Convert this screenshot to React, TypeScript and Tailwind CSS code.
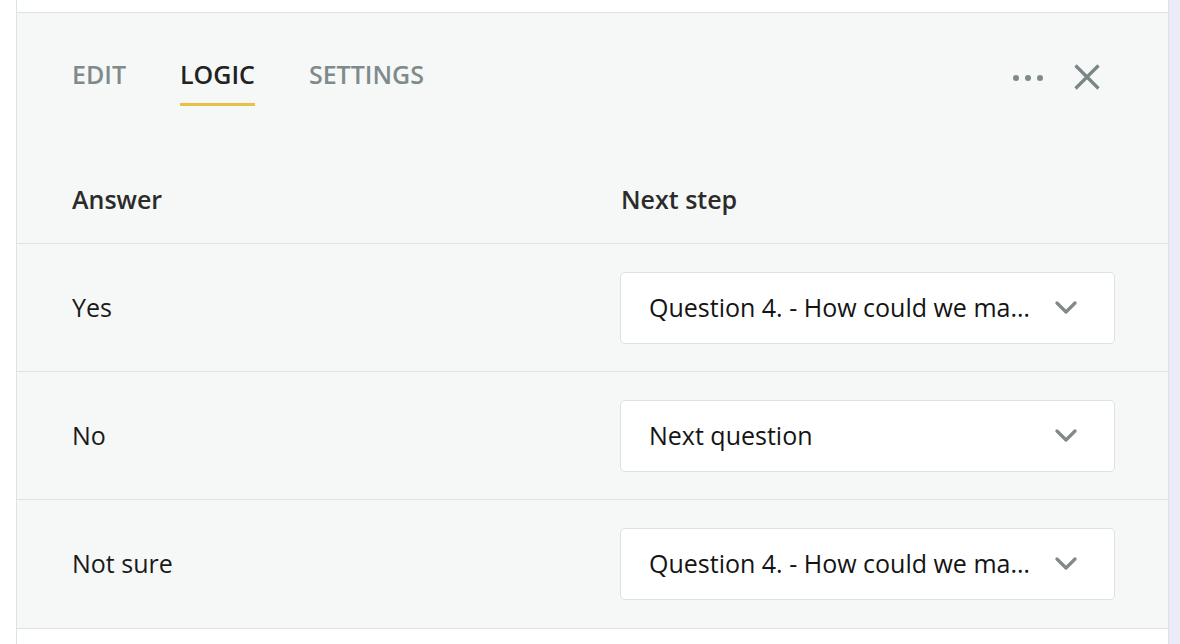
import { useState } from "react";

type Regra = {
  resposta: string;
  destino: string;
};

// textos como aparecem no select (já cortados pela largura do campo)
const regras: Regra[] = [
  { resposta: "Yes", destino: "Question 4. - How could we ma…" },
  { resposta: "No", destino: "Next question" },
  { resposta: "Not sure", destino: "Question 4. - How could we ma…" },
];

const abas = ["EDIT", "LOGIC", "SETTINGS"];

function Chevron() {
  return (
    <svg width="22" height="14" viewBox="0 0 22 14" fill="none" className="shrink-0">
      <polyline
        points="2,2 11,11 20,2"
        stroke="#7f8b8b"
        strokeWidth="3.2"
        strokeLinecap="round"
        strokeLinejoin="round"
      />
    </svg>
  );
}

export default function App() {
  const [abaAtual, setAbaAtual] = useState("LOGIC");

  return (
    <div className="flex h-[644px] w-[1180px] overflow-hidden bg-white font-['Open_Sans',sans-serif]">
      <div className="w-[16px] shrink-0" />

      <div className="flex flex-1 flex-col border-x border-[#dde2e2]">
        <div className="h-[12px] shrink-0" />

        <div className="border-y border-[#dde2e2] bg-[#f6f8f7]">
          {/* ABAS */}
          <div className="flex items-start justify-between pl-[55px] pr-[68px] pt-[45px]">
            <div className="flex gap-[54px]">
              {abas.map((aba) => (
                <button
                  key={aba}
                  onClick={() => setAbaAtual(aba)}
                  className={`border-b-[3px] pb-[13px] text-[25px] font-semibold leading-[32px] ${
                    abaAtual === aba
                      ? "border-[#e9c046] text-[#222]"
                      : "border-transparent text-[#7f8b8b]"
                  }`}
                >
                  {aba}
                </button>
              ))}
            </div>

            <div className="flex items-center gap-[31px] pt-[6px]">
              <div className="flex gap-[6px] pt-[1px]">
                <span className="h-[6px] w-[6px] rounded-full bg-[#7f8b8b]" />
                <span className="h-[6px] w-[6px] rounded-full bg-[#7f8b8b]" />
                <span className="h-[6px] w-[6px] rounded-full bg-[#7f8b8b]" />
              </div>
              <svg width="26" height="26" viewBox="0 0 26 26" fill="none">
                <path
                  d="M1.5 1.5L24.5 24.5M24.5 1.5L1.5 24.5"
                  stroke="#7a8686"
                  strokeWidth="3.2"
                />
              </svg>
            </div>
          </div>

          {/* CABEÇALHO */}
          <div className="grid grid-cols-[548px_495px] border-b border-[#dde2e2] pb-[28px] pl-[55px] pt-[77px] text-[25px] font-semibold leading-[32px] text-[#2b2b2b]">
            <span>Answer</span>
            <span className="pl-px">Next step</span>
          </div>

          {/* LINHAS */}
          {regras.map((regra, i) => (
            <div
              key={regra.resposta}
              className={`grid h-[128px] grid-cols-[548px_495px] items-center pl-[55px] ${
                i < regras.length - 1 ? "border-b border-[#dde2e2]" : ""
              }`}
            >
              <span className="mb-[2px] text-[25px] leading-[32px] text-[#1a1a1a]">
                {regra.resposta}
              </span>
              <div className="flex h-[72px] items-center justify-between gap-5 rounded-[5px] border border-[#dde2e2] bg-white pl-[28px] pr-[37px]">
                <span className="mb-[2px] truncate text-[25px] leading-[32px] text-[#141414]">
                  {regra.destino}
                </span>
                <Chevron />
              </div>
            </div>
          ))}
        </div>

        <div className="flex-1" />
      </div>

      <div className="w-[11px] shrink-0 bg-[#ebebf7]" />
    </div>
  );
}
